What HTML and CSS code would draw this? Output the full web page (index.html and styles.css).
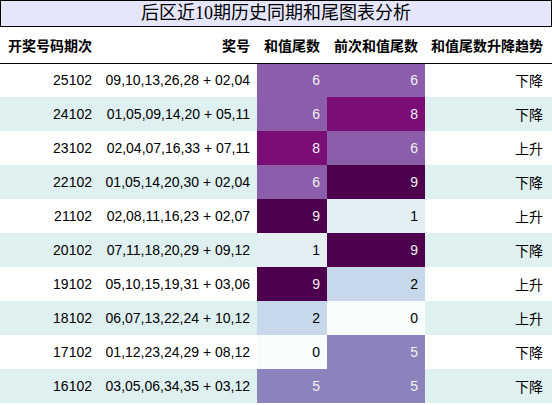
FILE: index.html
```html
<!DOCTYPE html>
<html lang="zh">
<head>
    <meta charset="UTF-8">
    <title>后区近10期历史同期和尾图表分析</title>
    <link rel="stylesheet" href="styles.css">
</head>
<body>
    <div class="title">后区近10期历史同期和尾图表分析</div>
    <table class="grid">
        <thead>
            <tr>
                <th class="c-issue">开奖号码期次</th>
                <th class="c-nums">奖号</th>
                <th class="c-tail">和值尾数</th>
                <th class="c-prev">前次和值尾数</th>
                <th class="c-trend">和值尾数升降趋势</th>
            </tr>
        </thead>
        <tbody>
            <tr><td>25102</td><td>09,10,13,26,28 + 02,04</td><td class="v6">6</td><td class="v6">6</td><td>下降</td></tr>
            <tr><td>24102</td><td>01,05,09,14,20 + 05,11</td><td class="v6">6</td><td class="v8">8</td><td>下降</td></tr>
            <tr><td>23102</td><td>02,04,07,16,33 + 07,11</td><td class="v8">8</td><td class="v6">6</td><td>上升</td></tr>
            <tr><td>22102</td><td>01,05,14,20,30 + 02,04</td><td class="v6">6</td><td class="v9">9</td><td>下降</td></tr>
            <tr><td>21102</td><td>02,08,11,16,23 + 02,07</td><td class="v9">9</td><td class="v1">1</td><td>上升</td></tr>
            <tr><td>20102</td><td>07,11,18,20,29 + 09,12</td><td class="v1">1</td><td class="v9">9</td><td>下降</td></tr>
            <tr><td>19102</td><td>05,10,15,19,31 + 03,06</td><td class="v9">9</td><td class="v2">2</td><td>上升</td></tr>
            <tr><td>18102</td><td>06,07,13,22,24 + 10,12</td><td class="v2">2</td><td class="v0">0</td><td>上升</td></tr>
            <tr><td>17102</td><td>01,12,23,24,29 + 08,12</td><td class="v0">0</td><td class="v5">5</td><td>下降</td></tr>
            <tr><td>16102</td><td>03,05,06,34,35 + 03,12</td><td class="v5">5</td><td class="v5">5</td><td>下降</td></tr>
        </tbody>
    </table>
</body>
</html>
```

FILE: styles.css
```css
body {
    margin: 0;
    background-color: #fff;
    color: #000;
    font-family: "Liberation Sans", "Noto Sans CJK SC", sans-serif;
    font-size: 14px;
}

/* barra del titolo */
.title {
    height: 25px;
    line-height: 25px;
    border: 1px solid #000;
    background-color: #e6e6fa;
    text-align: center;
    font-family: "Liberation Serif", "Noto Sans CJK SC", serif;
    font-size: 18px;
}

.grid {
    width: 552px;
    table-layout: fixed;
    border-collapse: collapse;
}
.grid th,
.grid td {
    box-sizing: border-box;
    padding: 0 7px 0 6px;
    text-align: right;
    white-space: nowrap;
}
.grid th {
    height: 36px;
    font-weight: bold;
    border-bottom: 1px solid #000;
}
.grid th.c-issue {
    text-align: left;
    padding-left: 8px;
}
.grid td {
    height: 34px;
}
.grid th:last-child,
.grid td:last-child {
    padding-right: 9px;
}
.grid tbody tr:nth-child(even) {
    background-color: #dff0f0;
}
.c-issue { width: 99px; }
.c-nums { width: 158px; }
.c-tail { width: 70px; }
.c-prev { width: 98px; }
.c-trend { width: 127px; }

/* scala BuPu per le cifre */
.grid td.v0 { background-color: #f7fcfd; color: #000; }
.grid td.v1 { background-color: #e3eef5; color: #000; }
.grid td.v2 { background-color: #c6d8e9; color: #000; }
.grid td.v5 { background-color: #8c83bd; color: #f1f1f1; }
.grid td.v6 { background-color: #8b5daa; color: #f1f1f1; }
.grid td.v8 { background-color: #7b0d77; color: #f1f1f1; }
.grid td.v9 { background-color: #4d004b; color: #f1f1f1; }
```
